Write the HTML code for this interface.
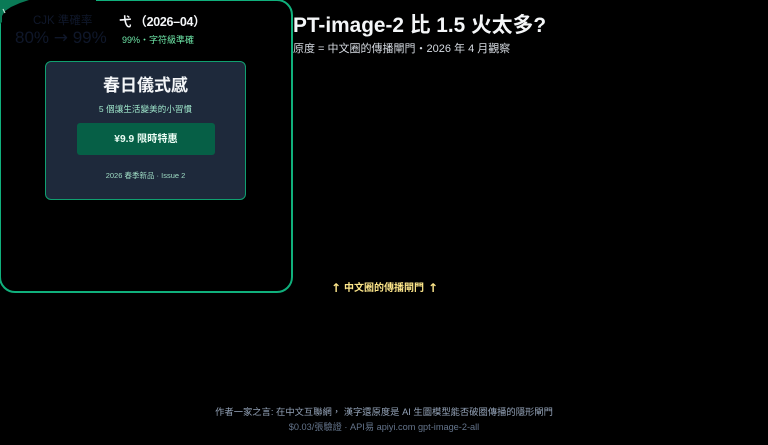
<!DOCTYPE html>
<html lang="zh-Hant">
<head>
<meta charset="utf-8">
<style>
html,body{margin:0;padding:0;background:#000;width:768px;height:445px;overflow:hidden}
body{position:relative;font-family:"Liberation Sans","Noto Sans CJK TC",sans-serif}
.a{position:absolute;white-space:nowrap}
</style>
</head>
<body>
<div class="a" style="left:-1px;top:-1px;width:290px;height:290px;border:2px solid #10b07c;border-radius:16px"></div>
<div class="a" style="left:26px;top:0;width:70px;height:3px;background:#000"></div>
<svg class="a" style="left:0;top:0" width="32" height="24" viewBox="0 0 32 24"><path d="M0 0H29L20 3L11 7L5 11L2 16L2 22L0 24Z" fill="#0a7a56"/><path d="M3 9L5 13" stroke="#bfe5d5" stroke-width="1.2"/></svg>

<div class="a" style="left:33px;top:14px;font-size:11.5px;line-height:14px;color:#0f172a">CJK 準確率</div>
<div class="a" style="left:15px;top:28px;font-size:17px;line-height:20px;color:#0f172a">80% <span style="font-family:'DejaVu Sans'">→</span> 99%</div>
<div class="a" style="left:119px;top:14px;font-size:12.5px;line-height:17px;font-weight:700;letter-spacing:-.3px;color:#f4f6f8">弋 （2026–04）</div>
<div class="a" style="left:122px;top:34px;font-size:9px;line-height:12px;color:#6ee7a8">99%・字符級準確</div>

<div class="a" style="left:45px;top:61px;width:199px;height:137px;background:#1e293b;border:1px solid #10a070;border-radius:6px"></div>
<div class="a" style="left:46px;top:74px;width:199px;text-align:center;font-size:17px;line-height:24px;font-weight:700;color:#f4f6f8">春日儀式感</div>
<div class="a" style="left:46px;top:103px;width:199px;text-align:center;font-size:8.5px;line-height:13px;letter-spacing:.1px;color:#a0e8cc">5 個讓生活變美的小習慣</div>
<div class="a" style="left:77px;top:123px;width:138px;height:32px;background:#065f46;border-radius:3px;text-align:center;font-size:10.2px;line-height:34px;font-weight:700;color:#ecfdf5">¥9.9 限時特惠</div>
<div class="a" style="left:46px;top:170px;width:199px;text-align:center;font-size:7.5px;line-height:11px;color:#9fdcc4">2026 春季新品 · Issue 2</div>

<div class="a" style="left:293px;top:13px;width:300px;height:26px;overflow:hidden;font-size:20.8px;line-height:26px;font-weight:700;color:#f4f6f8">PT-image-2 比 1.5 火太多?</div>
<div class="a" style="left:293px;top:42px;font-size:11px;line-height:15px;color:#d6dbe2">原度 = 中文圈的傳播閘門・2026 年 4 月觀察</div>

<div class="a" style="left:331px;top:281px;font-size:12px;line-height:15px;font-weight:700;color:#fde68a;font-family:'DejaVu Sans',sans-serif">↑</div>
<div class="a" style="left:284px;top:282px;width:200px;text-align:center;font-size:10px;line-height:14px;font-weight:700;color:#fde68a">中文圈的傳播閘門</div>
<div class="a" style="left:428px;top:281px;font-size:12px;line-height:15px;font-weight:700;color:#fde68a;font-family:'DejaVu Sans',sans-serif">↑</div>

<div class="a" style="left:0;top:406px;width:768px;text-align:center;font-size:9.3px;line-height:13px;color:#94a3b8">作者一家之言: 在中文互聯網， 漢字還原度是 AI 生圖模型能否破圈傳播的隱形閘門</div>
<div class="a" style="left:0;top:421px;width:768px;text-align:center;font-size:9.2px;line-height:12px;color:#64748b">$0.03/張驗證 · API易 apiyi.com gpt-image-2-all</div>
</body>
</html>
